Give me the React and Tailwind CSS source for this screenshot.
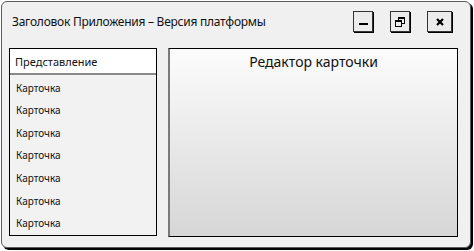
export default function App() {
  const items = ["Карточка", "Карточка", "Карточка", "Карточка", "Карточка", "Карточка", "Карточка"];

  return (
    <div className="w-[474px] h-[251px] bg-white pt-px pl-px" style={{ fontFamily: '"Noto Sans", "Open Sans", sans-serif' }}>
      <div className="w-[470px] h-[247px] border border-[#5c5c5c] rounded-[6px] shadow-[2px_2px_0_#000] bg-[#f0f0f0] flex flex-col">
        {/* title bar */}
        <div className="h-[40px] flex items-center pl-[10px] pr-[18px]">
          <span className="text-[12px] text-[#111] tracking-[-0.25px]">Заголовок Приложения – Версия платформы</span>
          <div className="ml-auto flex items-center gap-[17px] -mt-px">
            <button className="w-[20px] h-[21px] border border-[#333] bg-[#ececec] shadow-[1px_1px_0_#000] flex items-center justify-center">
              <span className="block w-[9px] h-[2px] bg-black mt-[4px]" />
            </button>
            <button className="w-[20px] h-[21px] border border-[#333] bg-[#ececec] shadow-[1px_1px_0_#000] flex items-center justify-center">
              <svg width="10" height="10" viewBox="0 0 10 10">
                <rect x="3.5" y="0.5" width="6" height="6" fill="none" stroke="#000" />
                <rect x="3.5" y="0.5" width="6" height="1.5" fill="#000" />
                <rect x="0.5" y="3.5" width="6" height="6" fill="#ececec" stroke="#000" />
                <rect x="0.5" y="3.5" width="6" height="1.5" fill="#000" />
              </svg>
            </button>
            <button className="w-[25px] h-[21px] border border-[#333] bg-[#ececec] shadow-[1px_1px_0_#000] flex items-center justify-center">
              <svg width="8" height="8" viewBox="0 0 8 8">
                <path d="M1 1L7 7M7 1L1 7" stroke="#000" strokeWidth="2.2" />
              </svg>
            </button>
          </div>
        </div>

        {/* body */}
        <div className="flex gap-[11px] pl-[7px] pt-[6px]">
          <div className="w-[148px] h-[188px] border border-black bg-[#f2f2f2] flex flex-col">
            <div className="h-[26px] bg-white border-b-2 border-[#8a8a8a] flex items-center pl-[5px] pt-[3px] text-[11px] text-[#111]">
              Представление
            </div>
            <div className="flex flex-col pl-[6px] pt-[2px]">
              {items.map((t, i) => (
                <div key={i} className="h-[22.6px] flex items-center text-[10px] text-[#111]">
                  {t}
                </div>
              ))}
            </div>
          </div>

          <div className="w-[290px] h-[189px] border border-black border-l-2 border-l-[#7a7a7a] bg-gradient-to-b from-[#fcfcfc] to-[#d6d6d6] flex justify-center">
            <span className="text-[14px] text-[#111] mt-[2px] h-fit">Редактор карточки</span>
          </div>
        </div>
      </div>
    </div>
  );
}
